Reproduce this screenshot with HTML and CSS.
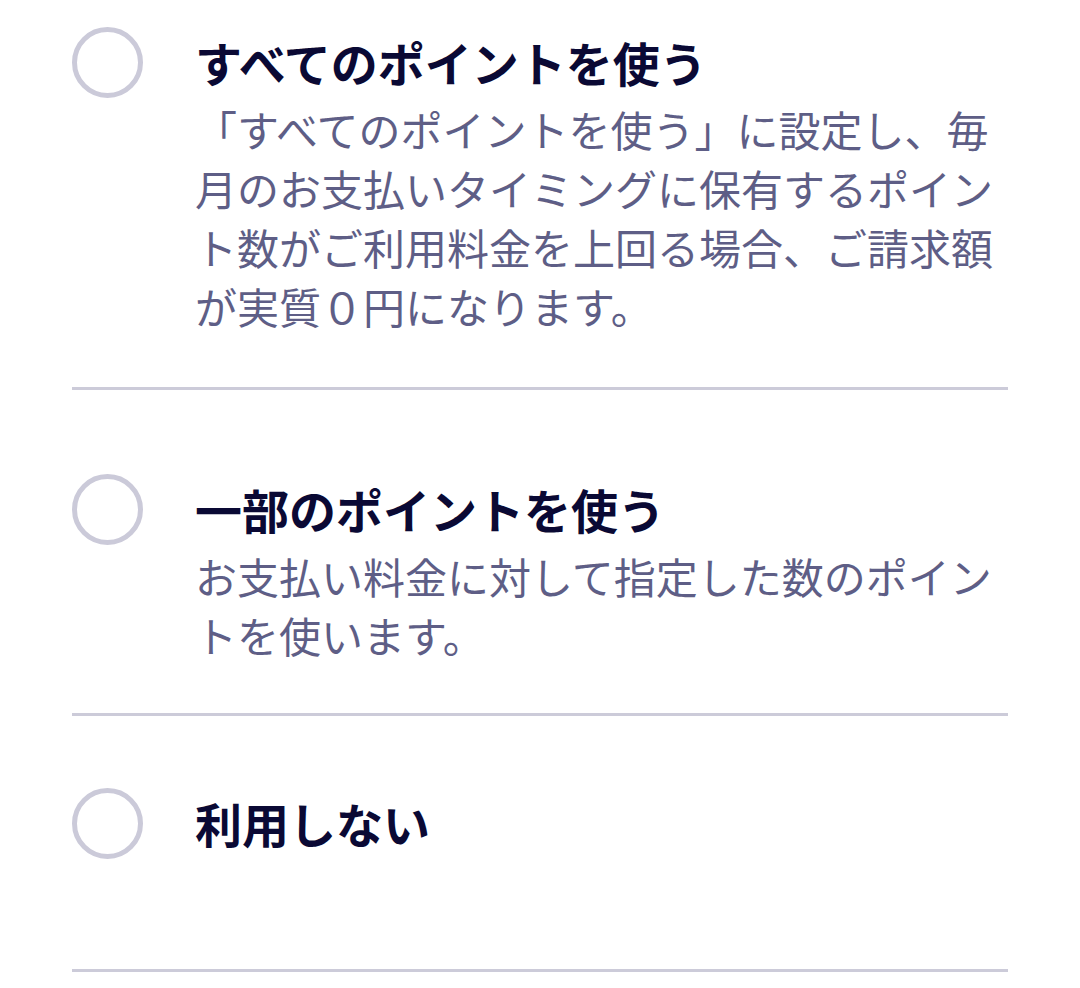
FILE: index.html
```html
<!DOCTYPE html>
<html lang="ja">
<head>
    <meta charset="UTF-8">
    <meta name="viewport" content="width=device-width, initial-scale=1.0">
    <title>ポイントの利用設定</title>
    <link rel="stylesheet" href="styles.css">
</head>
<body>
    <div class="option-list">
        <label class="option option-all">
            <input type="radio" name="point-usage" value="all" class="option-input">
            <span class="radio"></span>
            <span class="option-body">
                <span class="option-title">すべてのポイントを使う</span>
                <span class="option-text">「すべてのポイントを使う」に設定し、毎月のお支払いタイミングに保有するポイント数がご利用料金を上回る場合、ご請求額が実質０円になります。</span>
            </span>
        </label>

        <label class="option option-part">
            <input type="radio" name="point-usage" value="part" class="option-input">
            <span class="radio"></span>
            <span class="option-body">
                <span class="option-title">一部のポイントを使う</span>
                <span class="option-text">お支払い料金に対して指定した数のポイントを使います。</span>
            </span>
        </label>

        <label class="option option-none">
            <input type="radio" name="point-usage" value="none" class="option-input">
            <span class="radio"></span>
            <span class="option-body">
                <span class="option-title">利用しない</span>
            </span>
        </label>
    </div>
</body>
</html>
```

FILE: styles.css
```css
body {
    font-family: 'Noto Sans CJK JP', 'Hiragino Kaku Gothic ProN', 'Hiragino Sans', sans-serif;
    background-color: #ffffff;
    margin: 0;
    padding: 0;
}
.option-list {
    padding: 0 72px;
}
.option {
    display: flex;
    align-items: flex-start;
    gap: 52px;
    border-bottom: 3px solid #cccbd9;
    cursor: pointer;
}
.option-all {
    padding: 27px 0 52px;
}
.option-part {
    padding: 84px 0 49px;
}
.option-none {
    padding: 72px 0 110px;
}
.option-input {
    position: absolute;
    opacity: 0;
    pointer-events: none;
}
.radio {
    flex: 0 0 71px;
    width: 71px;
    height: 71px;
    border: 5px solid #cbcad9;
    border-radius: 50%;
    box-sizing: border-box;
}
.option-input:checked + .radio {
    border-color: #0a0934;
}
.option-body {
    display: flex;
    flex-direction: column;
    flex: 1;
}
.option-title {
    font-size: 47px;
    font-weight: 700;
    line-height: 70px;
    color: #0a0934;
}
.option-text {
    font-size: 42px;
    line-height: 59px;
    color: #5e5e86;
    margin-top: 2px;
}
```
